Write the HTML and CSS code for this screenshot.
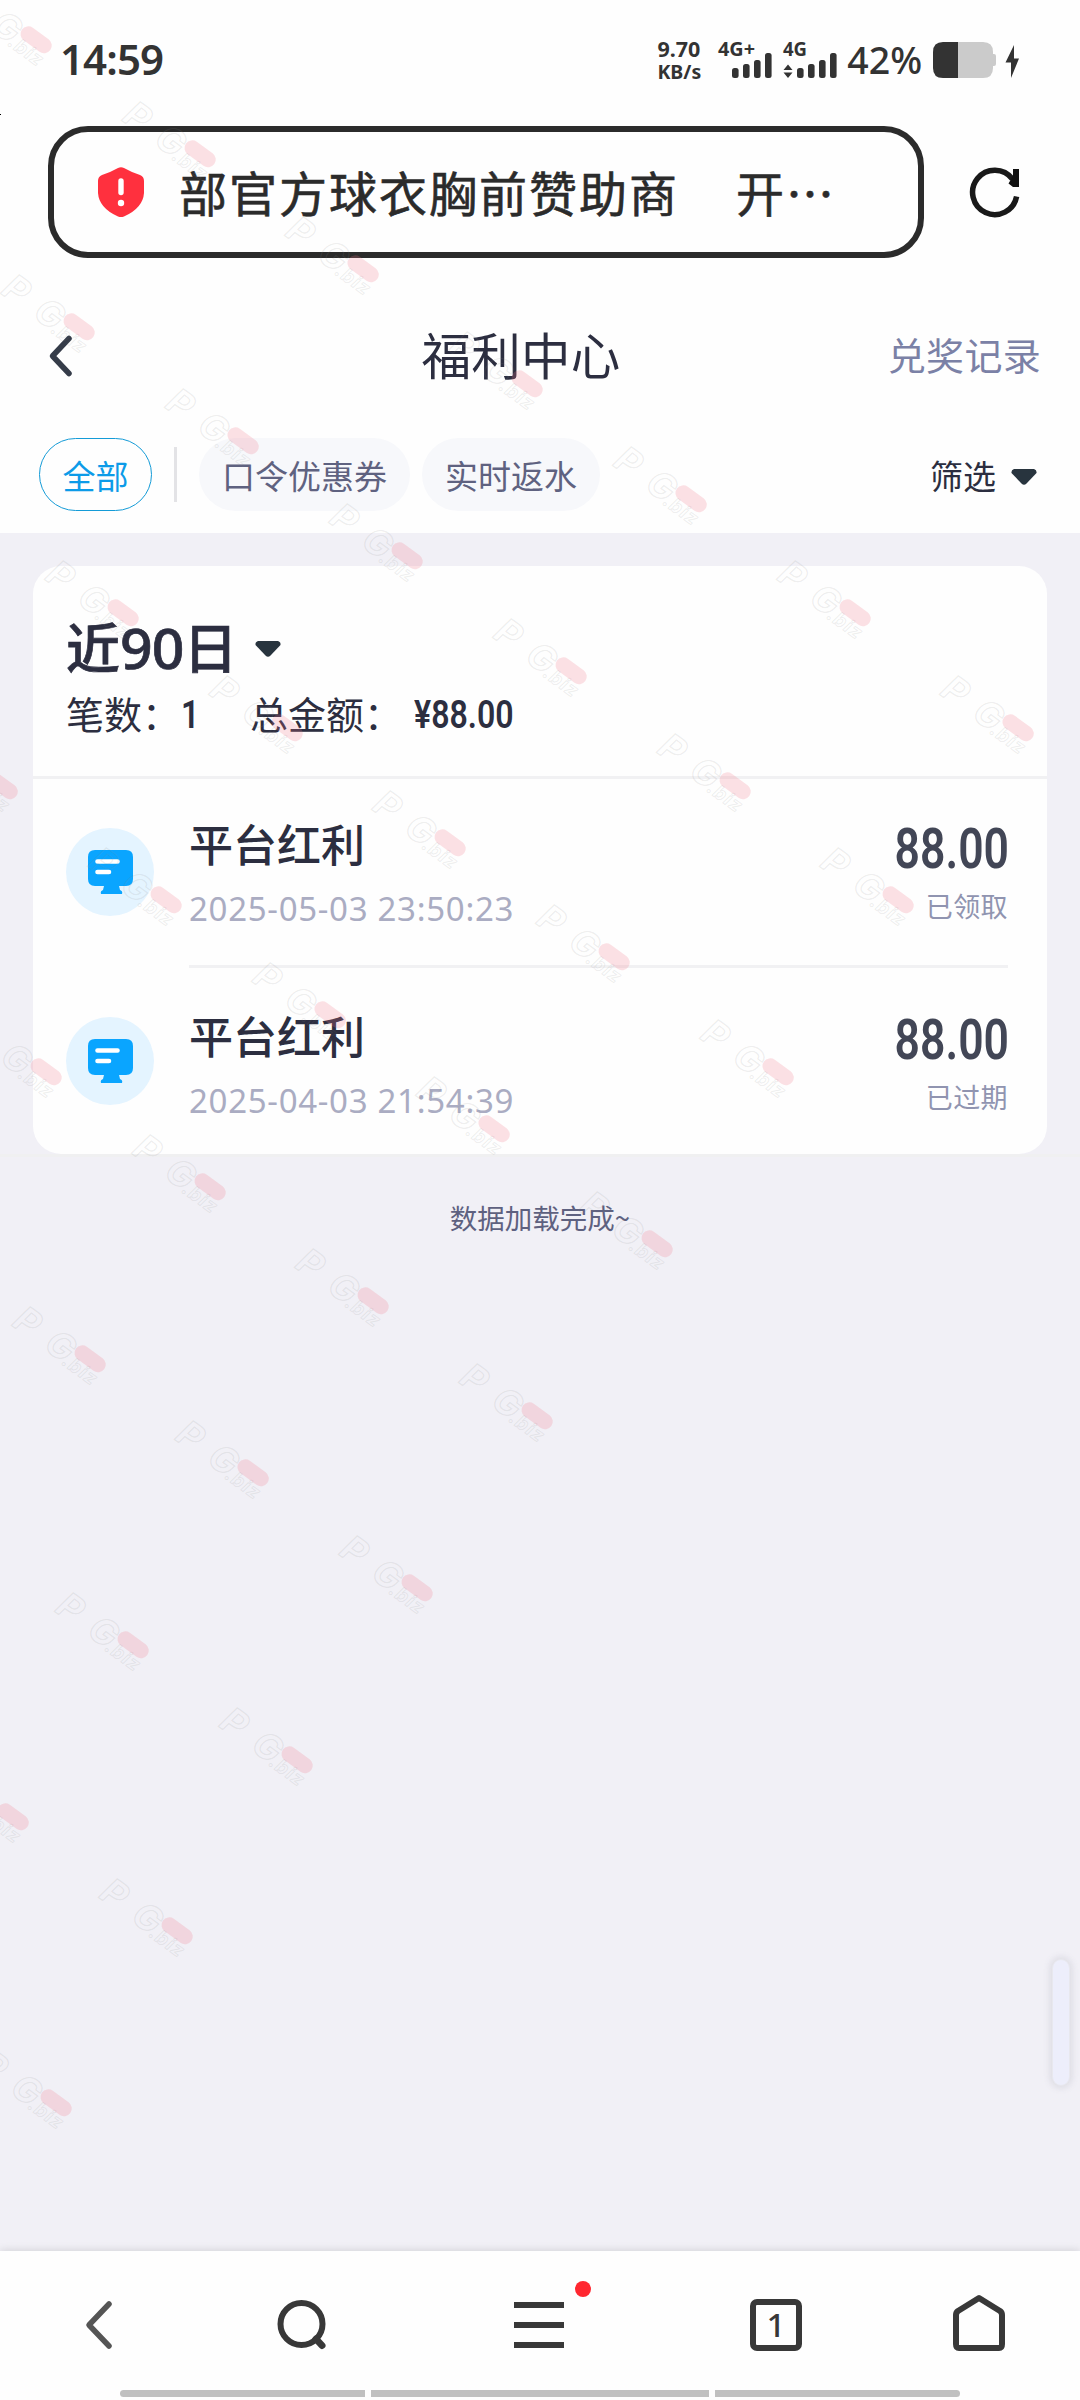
FILE: index.html
```html
<!DOCTYPE html>
<html lang="zh-CN">
<head>
<meta charset="utf-8">
<title>福利中心</title>
<link rel="stylesheet" href="styles.css">
</head>
<body>
<div class="screen">
  <div class="status">
    <span class="clock">14:59</span>
    <div class="speed"><span>9.70</span><span class="unit">KB/s</span></div>
    <svg class="signals" width="126" height="44" viewBox="0 0 126 44">
      <g fill="#333">
        <text x="0" y="18" class="net" textLength="37" lengthAdjust="spacingAndGlyphs">4G+</text>
        <rect x="14" y="30" width="6.6" height="10" rx="2.5"/><rect x="25" y="26" width="6.6" height="14" rx="2.5"/><rect x="36" y="22" width="6.6" height="18" rx="2.5"/><rect x="47" y="15" width="6.6" height="25" rx="2.5"/>
        <text x="65" y="18" class="net" textLength="24" lengthAdjust="spacingAndGlyphs">4G</text>
        <path d="M65.5 32l4.5-5.500 4.500 5.500zM65.500 34.500l4.500 5.500 4.500-5.500z"/>
        <rect x="79" y="30" width="6.6" height="10" rx="2.5"/><rect x="90" y="26" width="6.6" height="14" rx="2.5"/><rect x="101" y="22" width="6.6" height="18" rx="2.5"/><rect x="112" y="15" width="6.6" height="25" rx="2.5"/>
      </g>
    </svg>
    <span class="percent">42%</span>
    <svg class="battery" width="88" height="36" viewBox="0 0 88 36">
      <path d="M25 0h25q10 0 10 10v2h1q2 0 2 2v8q0 2-2 2h-1v2q0 10-10 10H25z" fill="#cbcbcb"/>
      <path d="M25 0H10Q0 0 0 10v16q0 10 10 10h15z" fill="#333"/>
      <path d="M81 3L72.500 20.500h5.500V36l8-19.500h-5z" fill="#333"/>
    </svg>
  </div>

  <div class="urlrow">
    <div class="urlbox">
      <svg class="shield" width="46" height="50" viewBox="0 0 46 50">
        <path d="M20 1Q23-.5 26 1Q33 5 42 8Q46 9.500 46 14V26Q45 41 26 49.500Q23 50.500 20 49.500Q1 41 0 26V14Q0 9.500 4 8Q13 5 20 1Z" fill="#ff303e"/>
        <path d="M23 14V25.500" stroke="#fff" stroke-width="5.400" stroke-linecap="round"/><circle cx="23" cy="36" r="3.200" fill="#fff"/>
      </svg>
      <span class="urltext">部官方球衣胸前赞助商</span><span class="urltext more">开…</span>
    </div>
    <svg class="reload" width="50" height="50" viewBox="0 0 50 50">
      <path d="M47.600 29.500A22.200 22.200 0 1 1 43.500 12" fill="none" stroke="#191919" stroke-width="5.500"/>
      <path d="M44 2H50V20H44L39.500 16.500L44 9Z" fill="#111"/>
    </svg>
  </div>

  <header class="head">
    <svg width="26" height="44" viewBox="0 0 26 44"><path d="M21 4.500L4.500 22L21 39.500" fill="none" stroke="#353c49" stroke-width="5.500" stroke-linecap="round" stroke-linejoin="round"/></svg>
    <h1 class="title">福利中心</h1>
    <a class="records">兑奖记录</a>
  </header>

  <nav class="filters">
    <span class="chip active">全部</span>
    <i class="bar"></i>
    <span class="chip">口令优惠券</span>
    <span class="chip last">实时返水</span>
    <span class="pick">筛选</span>
    <svg class="pick-caret" width="26" height="16" viewBox="0 0 26 16"><path d="M3 0h20q3 1 2.500 4L15.500 14.500q-2.500 2.500-5 0L.5 4Q0 1 3 0z" fill="#28343e"/></svg>
  </nav>

  <main class="content">
    <section class="card">
      <div class="summary">
        <div class="range"><span>近<span class="days">90</span>日</span><svg class="caret" width="26" height="16" viewBox="0 0 26 16"><path d="M3 0h20q3 1 2.500 4L15.500 14.500q-2.500 2.500-5 0L.5 4Q0 1 3 0z" fill="#28343e"/></svg></div>
        <div class="totals"><span class="count-label">笔数：</span><b class="num count">1</b><span class="sum-label">总金额：</span><b class="num">¥88.00</b></div>
      </div>
      <div class="item">
        <svg class="badge" width="88" height="88" viewBox="0 0 88 88"><circle cx="44" cy="44" r="44" fill="#e4f4ff"/><path d="M29 22h31q7 0 7 7v22q0 7-7 7h-7l1 4q3 1 2 4H35q-1-3 2-4l1-4h-9q-7 0-7-7V29q0-7 7-7z" fill="#0aa5ff"/><path d="M31.500 33.500H51.500M31.500 44H43" stroke="#fff" stroke-width="4.600" stroke-linecap="round"/></svg>
        <div class="info"><div class="name">平台红利</div><div class="date">2025-05-03 23:50:23</div></div>
        <div class="result"><div class="amount">88.00</div><div class="state">已领取</div></div>
      </div>
      <div class="item second">
        <svg class="badge" width="88" height="88" viewBox="0 0 88 88"><circle cx="44" cy="44" r="44" fill="#e4f4ff"/><path d="M29 22h31q7 0 7 7v22q0 7-7 7h-7l1 4q3 1 2 4H35q-1-3 2-4l1-4h-9q-7 0-7-7V29q0-7 7-7z" fill="#0aa5ff"/><path d="M31.500 33.500H51.500M31.500 44H43" stroke="#fff" stroke-width="4.600" stroke-linecap="round"/></svg>
        <div class="info"><div class="name">平台红利</div><div class="date">2025-04-03 21:54:39</div></div>
        <div class="result"><div class="amount">88.00</div><div class="state">已过期</div></div>
      </div>
    </section>
    <div class="edge"></div>
    <p class="done">数据加载完成~</p>
    <i class="thumb"></i>
  </main>

  <footer class="toolbar">
    <div class="tools">
      <svg class="back" width="30" height="56" viewBox="0 0 30 56"><path d="M25 7L5 28L25 49" fill="none" stroke="#555" stroke-width="5.500" stroke-linecap="round" stroke-linejoin="round"/></svg>
      <svg class="search" width="54" height="56" viewBox="0 0 54 56" fill="none" stroke="#383838"><circle cx="24.500" cy="27" r="21" stroke-width="6"/><path d="M39 42L45 48.500" stroke-width="7" stroke-linecap="round"/></svg>
      <svg class="menu" width="82" height="78" viewBox="0 0 82 78"><path d="M0 27H50M0 47H50M0 67H50" stroke="#383838" stroke-width="6"/><circle cx="69" cy="11" r="8" fill="#ff2730"/></svg>
      <span class="tabs">1</span>
      <svg class="home" width="52" height="58" viewBox="0 0 52 58"><path d="M26 4L47 17Q49 18.500 49 21V50Q49 54 46 54H6Q3 54 3 50V21Q3 18.500 5 17Z" fill="none" stroke="#383838" stroke-width="6" stroke-linejoin="round"/></svg>
    </div>
    <div class="handles"><i></i><i></i><i></i></div>
  </footer>

  <svg class="marks" width="1080" height="2400" viewBox="0 0 1080 2400">
    <defs>
      <g id="mark">
        <g transform="rotate(36)">
          <g font-family="Inter, sans-serif" font-weight="700" font-style="italic" fill="none" stroke="#888" stroke-opacity=".15" stroke-width="1.200">
            <text x="-84" y="19" font-size="36" textLength="66" lengthAdjust="spacing">PG</text>
            <text x="-21" y="21" font-size="19" stroke-width=".9" textLength="38">.biz</text>
          </g>
          <rect x="-17.500" y="-8" width="35" height="15.500" rx="7.750" fill="#f07888" fill-opacity=".22"/>
        </g>
      </g>
    </defs>
    <use href="#mark" x="36" y="40"/><use href="#mark" x="200" y="154"/><use href="#mark" x="363" y="269"/><use href="#mark" x="527" y="384"/><use href="#mark" x="691" y="499"/><use href="#mark" x="855" y="613"/><use href="#mark" x="1018" y="728"/>
    <use href="#mark" x="79" y="327"/><use href="#mark" x="243" y="441"/><use href="#mark" x="407" y="556"/><use href="#mark" x="571" y="671"/><use href="#mark" x="735" y="786"/><use href="#mark" x="898" y="900"/>
    <use href="#mark" x="123" y="613"/><use href="#mark" x="287" y="728"/><use href="#mark" x="450" y="843"/><use href="#mark" x="614" y="957"/><use href="#mark" x="778" y="1072"/>
    <use href="#mark" x="2" y="786"/><use href="#mark" x="166" y="900"/><use href="#mark" x="330" y="1015"/><use href="#mark" x="494" y="1129"/><use href="#mark" x="657" y="1244"/>
    <use href="#mark" x="46" y="1072"/><use href="#mark" x="210" y="1187"/><use href="#mark" x="373" y="1301"/><use href="#mark" x="537" y="1416"/>
    <use href="#mark" x="90" y="1359"/><use href="#mark" x="253" y="1473"/><use href="#mark" x="417" y="1588"/>
    <use href="#mark" x="133" y="1645"/><use href="#mark" x="297" y="1760"/>
    <use href="#mark" x="13" y="1817"/><use href="#mark" x="177" y="1931"/>
    <use href="#mark" x="56" y="2103"/>
    <rect x="0" y="114" width="1" height="1" fill="#000"/>
  </svg>
</div>
</body>
</html>
```
FILE: styles.css
```css
* { box-sizing: border-box; }
body { margin: 0; }
svg { display: block; flex: none; overflow: visible; }
span, a, div, b { white-space: nowrap; }

.screen {
  position: relative;
  width: 1080px;
  height: 2400px;
  overflow: hidden;
  display: flex;
  flex-direction: column;
  background: #fefefe;
  color: #2c2e40;
  font-family: "Noto Sans CJK SC", sans-serif;
}

.status {
  height: 126px;
  padding: 37px 59px 0 60px;
  display: flex;
  align-items: flex-start;
  font-family: "Noto Sans", sans-serif;
  color: #333;
}
.clock { width: 599px; font-size: 42px; line-height: 44px; font-weight: 600; letter-spacing: -0.9px; }
.speed { width: 61px; display: flex; flex-direction: column; font-size: 21.5px; line-height: 24px; font-weight: 700; }
.unit { font-size: 19.5px; line-height: 22px; }
.signals { margin-top: 1px; }
.net { font: 700 19px "Noto Sans", sans-serif; }
.percent { width: 88px; padding-left: 3px; font-size: 37.5px; line-height: 45px; font-weight: 500; }
.battery { margin-top: 5px; margin-left: 1px; }

.urlrow { height: 132px; padding: 0 61px 0 48px; display: flex; align-items: center; justify-content: space-between; }
.urlbox {
  width: 876px;
  height: 132px;
  padding-left: 44px;
  border: 6px solid #2b2b2b;
  border-radius: 40px;
  display: flex;
  align-items: center;
}
.urltext { margin: -2px 0 0 35px; font-size: 48px; line-height: 60px; font-weight: 400; -webkit-text-stroke: .6px #2b2b2b; letter-spacing: 2px; color: #2b2b2b; }
.more { margin-left: 57px; }

.head { margin-top: 16px; height: 160px; padding: 0 39px 0 48px; display: grid; grid-template-columns: 150px 1fr 160px; align-items: center; }
.head svg { margin-top: 3px; }
.title { margin: 0; text-align: center; font-size: 49.5px; line-height: 60px; font-weight: 400; padding-right: 37px; letter-spacing: .2px; }
.records { font-size: 38px; line-height: 50px; letter-spacing: .3px; color: #7b81a6; justify-self: end; }

.filters { margin-top: 4px; height: 95px; padding: 0 43px 22px 39px; display: flex; align-items: center; }
.chip { height: 73px; padding: 0 23px; border-radius: 37px; background: #f7f8fb; color: #5f6280; font-size: 33px; line-height: 75px; }
.chip.active { padding: 0; width: 113px; text-align: center; background: none; border: 1.5px solid #149bd7; color: #0c9be8; font-size: 33px; line-height: 73px; }
.bar { width: 3px; height: 55px; margin: 0 22px; background: #e3e3e6; }
.last { margin-left: 12px; }
.pick { margin: 1px 15px 0 auto; font-size: 33px; line-height: 40px; }
.pick-caret { margin-top: 4px; }

.content { position: relative; flex: 1; padding: 33px 33px 0; background: #f1f0f6; }
.card { height: 588px; border-radius: 28px; background: #fefefe; }
.summary { height: 213px; padding: 50px 33px 0; border-bottom: 3px solid #f1f1f3; }
.range { display: flex; align-items: center; gap: 17px; font-size: 54px; line-height: 60px; font-weight: 500; -webkit-text-stroke: .7px #2c2e40; }
.days { font-family: "Noto Sans", sans-serif; font-size: 57px; font-weight: 500; letter-spacing: -.8px; line-height: 1; }
.range svg { margin-top: 6px; }
.totals { margin-top: 12px; display: flex; font-size: 38px; line-height: 50px; }
.num { font-family: Roboto, sans-serif; font-weight: 600; line-height: 54px; transform: scaleX(.845); transform-origin: 0 50%; }
.count { width: 69px; margin-left: 1px; }
.sum-label { width: 164px; }

.item { height: 189px; padding: 0 39px 0 33px; display: flex; align-items: flex-start; }
.badge { margin-top: 49px; }
.info { flex: 1; height: 189px; margin-left: 35px; padding-top: 39px; border-bottom: 3px solid #f1f1f3; }
.name { font-size: 44px; line-height: 50px; font-weight: 500; }
.date { margin-top: 21px; font-family: "Noto Sans", sans-serif; font-size: 33px; line-height: 40px; letter-spacing: .7px; color: #aaacc2; }
.result { height: 189px; padding-top: 45px; border-bottom: 3px solid #f1f1f3; text-align: right; }
.amount { width: 140px; font-family: Roboto, sans-serif; font-size: 55px; line-height: 50px; font-weight: 600; color: #424656; transform: scaleX(.81); transform-origin: 100% 50%; }
.state { margin-top: 12px; font-size: 27px; line-height: 40px; letter-spacing: .4px; color: #9094b0; }
.second .info, .second .result { border: 0; }
.second .info { padding-top: 42px; }
.second .result { padding-top: 47px; }
.edge { height: 3px; margin: 0 -33px; background: #f0f0f1; }
.done { margin: 40px 0 0; text-align: center; font-size: 27.5px; line-height: 40px; color: #5e6180; }
.thumb { position: absolute; right: 10px; top: 1426px; width: 18px; height: 127px; border-radius: 9px; background: #edeefb; border: 1px solid #e8e8ee; box-shadow: 0 0 7px 2px rgba(90, 90, 110, .14); }

.toolbar { position: relative; height: 149px; padding-top: 27px; background: #fefefe; box-shadow: 0 -1px 8px rgba(0, 0, 0, .12); }
.tools { height: 78px; padding-left: 84px; display: flex; align-items: flex-start; }
.back { margin-top: 19px; }
.search { margin: 19px 0 0 163px; }
.menu { margin-left: 183px; }
.tabs { width: 52px; height: 52px; margin: 21px 0 0 154px; border: 6px solid #383838; border-radius: 7px; font: 500 33px/40px "Noto Sans", sans-serif; text-align: center; color: #383838; }
.home { margin: 16px 0 0 151px; }
.handles { padding-left: 120px; margin-top: 34px; display: grid; grid-template-columns: 245px 338px 245px; gap: 6px; }
.handles i { height: 7px; background: #c0c0c0; }
.handles i:first-child { border-radius: 4px 0 0 4px; }
.handles i:last-child { border-radius: 0 4px 4px 0; }

.marks { position: absolute; left: 0; top: 0; pointer-events: none; }
```
